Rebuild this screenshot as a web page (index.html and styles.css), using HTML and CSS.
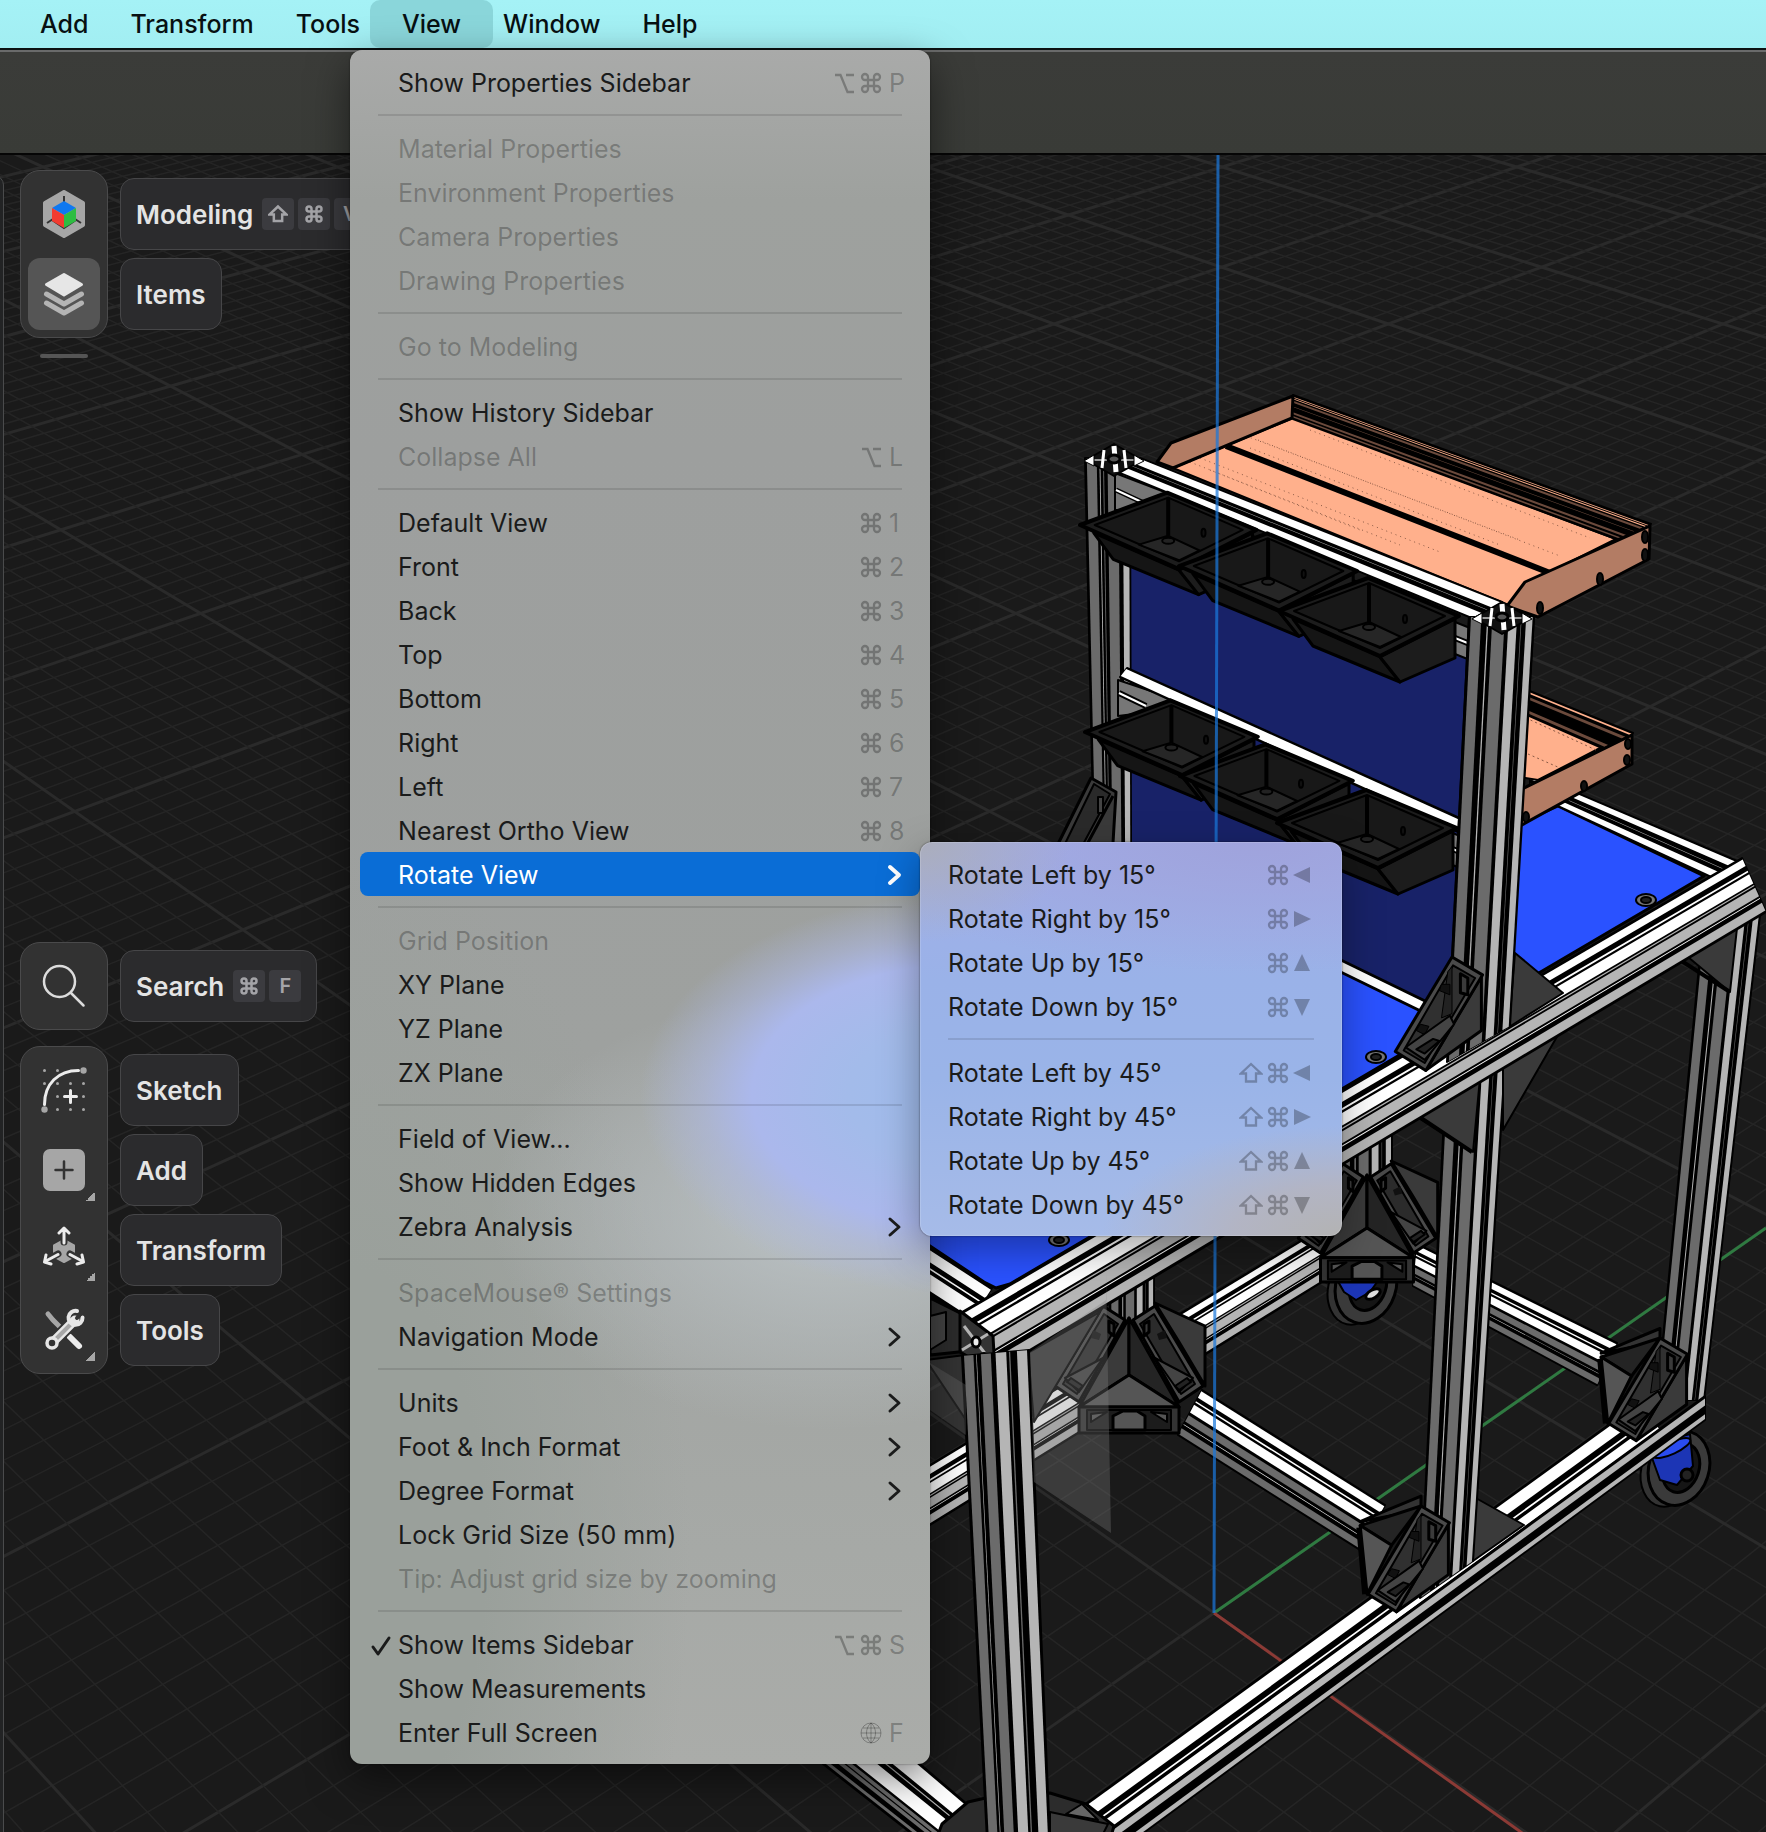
FILE: index.html
```html
<!DOCTYPE html>
<html lang="en">
<head>
<meta charset="utf-8">
<title>Workbench</title>
<link rel="stylesheet" href="styles.css">
</head>
<body>
<svg class="sprite" aria-hidden="true">
  <symbol id="cmd" viewBox="0 0 24 24"><path d="M15 6v12a3 3 0 1 0 3-3H6a3 3 0 1 0 3 3V6a3 3 0 1 0-3 3h12a3 3 0 1 0-3-3"/></symbol>
  <symbol id="opt" viewBox="0 0 24 24"><path d="M3 4h5.500l7 17H22M14 4h8"/></symbol>
  <symbol id="shift" viewBox="0 0 24 24"><path d="M12 3 2 12.500h5V20.500h10V12.500h5z"/></symbol>
  <symbol id="chev" viewBox="0 0 24 24"><path d="m8 4 9 8-9 8"/></symbol>
  <symbol id="tick" viewBox="0 0 24 24"><path d="m4 14 5 7L20 5"/></symbol>
  <symbol id="globe" viewBox="0 0 24 24"><path d="M12 2a10 10 0 1 0 0 20a10 10 0 1 0 0-20M12 2c-6 5-6 15 0 20M12 2c6 5 6 15 0 20M12 2v20M2 12h20M4 7h16M4 17h16"/></symbol>
  <symbol id="tl" viewBox="0 0 24 24"><path d="M3 12 20 4v16z"/></symbol>
  <symbol id="tr" viewBox="0 0 24 24"><path d="M21 12 4 4v16z"/></symbol>
  <symbol id="tu" viewBox="0 0 24 24"><path d="M12 3 4 20h16z"/></symbol>
  <symbol id="td" viewBox="0 0 24 24"><path d="M12 21 4 4h16z"/></symbol>
</svg>

<nav class="menubar" aria-label="Menu bar">
  <ul class="menubar-list">
    <li><button class="menubar-item">Add</button></li>
    <li><button class="menubar-item">Transform</button></li>
    <li><button class="menubar-item">Tools</button></li>
    <li class="anchor">
      <button class="menubar-item open" aria-expanded="true">View</button>
      <ul class="menu view-menu">
        <li><button class="item">Show Properties Sidebar<span class="keys"><svg><use href="#opt"/></svg><svg><use href="#cmd"/></svg><b>P</b></span></button></li>
        <li class="sep"></li>
        <li><button class="item" disabled>Material Properties</button></li>
        <li><button class="item" disabled>Environment Properties</button></li>
        <li><button class="item" disabled>Camera Properties</button></li>
        <li><button class="item" disabled>Drawing Properties</button></li>
        <li class="sep"></li>
        <li><button class="item" disabled>Go to Modeling</button></li>
        <li class="sep"></li>
        <li><button class="item">Show History Sidebar</button></li>
        <li><button class="item" disabled>Collapse All<span class="keys"><svg><use href="#opt"/></svg><b>L</b></span></button></li>
        <li class="sep"></li>
        <li><button class="item">Default View<span class="keys"><svg><use href="#cmd"/></svg><b>1</b></span></button></li>
        <li><button class="item">Front<span class="keys"><svg><use href="#cmd"/></svg><b>2</b></span></button></li>
        <li><button class="item">Back<span class="keys"><svg><use href="#cmd"/></svg><b>3</b></span></button></li>
        <li><button class="item">Top<span class="keys"><svg><use href="#cmd"/></svg><b>4</b></span></button></li>
        <li><button class="item">Bottom<span class="keys"><svg><use href="#cmd"/></svg><b>5</b></span></button></li>
        <li><button class="item">Right<span class="keys"><svg><use href="#cmd"/></svg><b>6</b></span></button></li>
        <li><button class="item">Left<span class="keys"><svg><use href="#cmd"/></svg><b>7</b></span></button></li>
        <li><button class="item">Nearest Ortho View<span class="keys"><svg><use href="#cmd"/></svg><b>8</b></span></button></li>
        <li class="anchor">
          <button class="item active" aria-expanded="true">Rotate View<svg class="chev"><use href="#chev"/></svg></button>
          <ul class="menu submenu">
            <li><button class="item">Rotate Left by 15°<span class="keys"><svg><use href="#cmd"/></svg><svg class="solid"><use href="#tl"/></svg></span></button></li>
            <li><button class="item">Rotate Right by 15°<span class="keys"><svg><use href="#cmd"/></svg><svg class="solid"><use href="#tr"/></svg></span></button></li>
            <li><button class="item">Rotate Up by 15°<span class="keys"><svg><use href="#cmd"/></svg><svg class="solid"><use href="#tu"/></svg></span></button></li>
            <li><button class="item">Rotate Down by 15°<span class="keys"><svg><use href="#cmd"/></svg><svg class="solid"><use href="#td"/></svg></span></button></li>
            <li class="sep"></li>
            <li><button class="item">Rotate Left by 45°<span class="keys"><svg><use href="#shift"/></svg><svg><use href="#cmd"/></svg><svg class="solid"><use href="#tl"/></svg></span></button></li>
            <li><button class="item">Rotate Right by 45°<span class="keys"><svg><use href="#shift"/></svg><svg><use href="#cmd"/></svg><svg class="solid"><use href="#tr"/></svg></span></button></li>
            <li><button class="item">Rotate Up by 45°<span class="keys"><svg><use href="#shift"/></svg><svg><use href="#cmd"/></svg><svg class="solid"><use href="#tu"/></svg></span></button></li>
            <li><button class="item">Rotate Down by 45°<span class="keys"><svg><use href="#shift"/></svg><svg><use href="#cmd"/></svg><svg class="solid"><use href="#td"/></svg></span></button></li>
          </ul>
        </li>
        <li class="sep"></li>
        <li><button class="item" disabled>Grid Position</button></li>
        <li><button class="item">XY Plane</button></li>
        <li><button class="item">YZ Plane</button></li>
        <li><button class="item">ZX Plane</button></li>
        <li class="sep"></li>
        <li><button class="item">Field of View...</button></li>
        <li><button class="item">Show Hidden Edges</button></li>
        <li><button class="item">Zebra Analysis<svg class="chev"><use href="#chev"/></svg></button></li>
        <li class="sep"></li>
        <li><button class="item" disabled>SpaceMouse® Settings</button></li>
        <li><button class="item">Navigation Mode<svg class="chev"><use href="#chev"/></svg></button></li>
        <li class="sep"></li>
        <li><button class="item">Units<svg class="chev"><use href="#chev"/></svg></button></li>
        <li><button class="item">Foot &amp; Inch Format<svg class="chev"><use href="#chev"/></svg></button></li>
        <li><button class="item">Degree Format<svg class="chev"><use href="#chev"/></svg></button></li>
        <li><button class="item">Lock Grid Size (50 mm)</button></li>
        <li><button class="item" disabled>Tip: Adjust grid size by zooming</button></li>
        <li class="sep"></li>
        <li><button class="item checked"><svg class="tick"><use href="#tick"/></svg>Show Items Sidebar<span class="keys"><svg><use href="#opt"/></svg><svg><use href="#cmd"/></svg><b>S</b></span></button></li>
        <li><button class="item">Show Measurements</button></li>
        <li><button class="item">Enter Full Screen<span class="keys"><svg class="fine"><use href="#globe"/></svg><b>F</b></span></button></li>
      </ul>
    </li>
    <li><button class="menubar-item">Window</button></li>
    <li><button class="menubar-item">Help</button></li>
  </ul>
</nav>
<div class="titlebar"></div>

<main class="viewport">
  <svg class="scene" id="scene" viewBox="0 155 1766 1677" preserveAspectRatio="xMinYMin slice" role="img" aria-label="Workbench model"></svg>
  <div class="panel-edge"></div>
  <div class="tools">
    <div class="group">
      <div class="rail">
        <button class="tool" aria-label="Modeling">
          <svg viewBox="0 0 48 48" class="ico48"><path d="M24 2 43 13v22L24 46 5 35V13z" fill="#a6a6a6" stroke="#a6a6a6" stroke-width="4" stroke-linejoin="round"/><path d="M24 6v8M7 33l6-4M41 33l-6-4M12 30l12 8 12-8" stroke="#333" stroke-width="2" fill="none"/><path d="M24 11 36 18 24 25 12 18z" fill="#0f78f0"/><path d="M12 18 24 25V38L12 31z" fill="#f23b30"/><path d="M36 18 24 25V38L36 31z" fill="#2ebd42"/></svg>
        </button>
        <button class="tool selected" aria-label="Items">
          <svg viewBox="0 0 48 48" class="ico48"><g stroke-linejoin="round" stroke-linecap="round"><path d="M6.500 33 24 43l17.500-10" fill="none" stroke="#b4b4b4" stroke-width="5"/><path d="M6.500 24 24 34l17.500-10" fill="none" stroke="#555" stroke-width="8"/><path d="M6.500 24 24 34l17.500-10" fill="none" stroke="#b4b4b4" stroke-width="5"/><path d="M24 4.500 42 14.500 24 25.500 6 14.500z" fill="#555" stroke="#555" stroke-width="6"/><path d="M24 4.500 41.500 14.500 24 25 6.500 14.500z" fill="#e6e6e6" stroke="#e6e6e6" stroke-width="3"/></g></svg>
        </button>
      </div>
      <div class="labels">
        <button class="label">Modeling<kbd class="first"><svg><use href="#shift"/></svg></kbd><kbd><svg><use href="#cmd"/></svg></kbd><kbd>V</kbd></button>
        <button class="label">Items</button>
      </div>
    </div>
    <div class="handle"></div>
    <div class="group search">
      <div class="rail">
        <button class="tool" aria-label="Search">
          <svg viewBox="0 0 48 48" class="ico48" fill="none" stroke="#dcdcdc" stroke-width="2.500" stroke-linecap="round"><circle cx="19.500" cy="19.500" r="15.500"/><path d="M31 31 43.500 43.500"/></svg>
        </button>
      </div>
      <div class="labels">
        <button class="label">Search<kbd class="first"><svg><use href="#cmd"/></svg></kbd><kbd>F</kbd></button>
      </div>
    </div>
    <div class="group">
      <div class="rail">
        <button class="tool" aria-label="Sketch">
          <svg viewBox="0 0 48 48" class="ico48"><g fill="#a6a6a6"><circle cx="4.500" cy="4.500" r="1.500"/><circle cx="17.500" cy="4.500" r="1.500"/><circle cx="4.500" cy="17.500" r="1.500"/><circle cx="17.500" cy="17.500" r="1.500"/><circle cx="30.500" cy="17.500" r="1.500"/><circle cx="43.500" cy="17.500" r="1.500"/><circle cx="17.500" cy="30.500" r="1.500"/><circle cx="43.500" cy="30.500" r="1.500"/><circle cx="17.500" cy="43.500" r="1.500"/><circle cx="30.500" cy="43.500" r="1.500"/><circle cx="43.500" cy="43.500" r="1.500"/><circle cx="43.500" cy="4.500" r="3.200"/><circle cx="4.500" cy="43.500" r="3.200"/></g><path d="M4.500 38.500C4.500 18 18 4.500 38.500 4.500M30.500 24.500v12M24.500 30.500h12" fill="none" stroke="#ececec" stroke-width="3" stroke-linecap="round"/></svg>
        </button>
        <button class="tool more" aria-label="Add">
          <svg viewBox="0 0 48 48" class="ico48"><rect x="3" y="3" width="42" height="42" rx="7" fill="#a6a6a6"/><path d="M24 15.500v17M15.500 24h17" stroke="#333" stroke-width="2.500" stroke-linecap="round"/></svg>
        </button>
        <button class="tool more" aria-label="Transform">
          <svg viewBox="0 0 48 48" class="ico48"><path d="M24 14 34 19.500v11L24 36 14 30.500v-11z" fill="#a6a6a6" stroke="#a6a6a6" stroke-width="2" stroke-linejoin="round"/><g fill="none" stroke-linecap="round" stroke-linejoin="round"><path d="M24 16V6M18 28 7 34M30 28l11 6" stroke="#333" stroke-width="7"/><path d="M24 17V2.500M19 7 24 2l5 5M18 28.500 5 35.500M6 29l-1.500 7 6.500 2M30 28.500 43 35.500M42 29l1.500 7-6.500 2" stroke="#ececec" stroke-width="3"/></g></svg>
        </button>
        <button class="tool more" aria-label="Tools">
          <svg viewBox="0 0 48 48" class="ico48" fill="none" stroke-linecap="round"><path d="M8 8l5 6 7 7" stroke="#a6a6a6" stroke-width="5"/><path d="M30 31l9 9" stroke="#ececec" stroke-width="6"/><path d="M13 36 35 14" stroke="#333" stroke-width="13"/><path d="M13 36 35 14" stroke="#e6e6e6" stroke-width="9"/><path d="M17 32 31 18" stroke="#a6a6a6" stroke-width="4"/><circle cx="12" cy="37" r="5" fill="#333" stroke="#e6e6e6" stroke-width="3.500"/><path d="M37 5a7 7 0 1 0 5.500 6.500" stroke="#e6e6e6" stroke-width="4"/><path d="M37 12 43 5" stroke="#333" stroke-width="4"/></svg>
        </button>
      </div>
      <div class="labels">
        <button class="label">Sketch</button>
        <button class="label">Add</button>
        <button class="label">Transform</button>
        <button class="label">Tools</button>
      </div>
    </div>
  </div>
</main>
<script src="scene.js"></script>
</body>
</html>
```
FILE: styles.css
```css
* { box-sizing: border-box; }
body {
  margin: 0;
  min-height: 100vh;
  display: flex;
  flex-direction: column;
  background: #1a1a1a;
  font-family: Inter, "Liberation Sans", sans-serif;
  font-size: 25px;
  overflow-x: hidden;
}
ul { list-style: none; margin: 0; padding: 0; }
button { font: inherit; color: inherit; border: 0; background: none; padding: 0; }
.sprite { position: absolute; width: 0; height: 0; }

/* menu bar */
.menubar {
  height: 50px;
  background: linear-gradient(#a5f2f6, #a2eef2);
  border-bottom: 2px solid #0c1212;
  position: relative;
  z-index: 2;
}
.menubar-list { display: flex; padding-left: 8px; }
.menubar-item {
  height: 48px;
  padding: 0 32px;
  margin-right: -22px;
  line-height: 44px;
  color: #071012;
  font-weight: 500;
  border-radius: 10px;
}
.menubar-item.open { background: #8ad6da; }
.anchor { position: relative; }

/* menus */
.menu {
  position: absolute;
  padding: 10px;
  border-radius: 12px;
  color: #1a1b1b;
  font-optical-sizing: none;
  box-shadow: 0 0 2px rgba(0,0,0,.5), 0 14px 40px rgba(0,0,0,.5);
}
.view-menu {
  left: -20px;
  top: 50px;
  width: 580px;
  background:
    radial-gradient(ellipse 320px 200px at 610px 1045px, #9ebbec 0, #a3bbea 35%, #abb8ec 65%, rgba(172,183,225,.6) 80%, rgba(172,180,205,0)),
    radial-gradient(ellipse 340px 220px at 480px 1160px, rgba(190,198,202,.9), rgba(180,186,186,0)),
    radial-gradient(ellipse 340px 700px at 0 1500px, #9aa09b 40%, rgba(154,160,155,0)),
    linear-gradient(#a9aaa9, #9ea19e 150px, #9d9f9e 400px, #9ea19f 1000px, #a6a9a6 1500px, #aaaca9);
}
.item {
  display: flex;
  align-items: center;
  width: 100%;
  height: 44px;
  padding: 2px 14px 0 38px;
  border-radius: 8px;
  text-align: left;
  white-space: nowrap;
}
.item:disabled { color: rgba(0,0,0,.26); }
.item.active { background: #0a6dd6; color: #fff; }
.sep { height: 22px; padding: 10px 18px; }
.sep::before { content: ""; display: block; height: 2px; background: rgba(0,0,0,.11); }
.keys {
  display: flex;
  align-items: center;
  gap: 3px;
  margin-left: auto;
  color: rgba(0,0,0,.27);
}
.item:disabled .keys { color: inherit; }
.keys b { width: 20px; padding-left: 3px; font-weight: 400; }
.keys svg, .chev, .tick {
  width: 24px;
  height: 24px;
  fill: none;
  stroke: currentColor;
  stroke-width: 2.300;
}
.keys .solid { fill: currentColor; stroke: none; margin-left: -3px; }
.keys .fine { stroke-width: 1; }
.chev { margin-left: auto; stroke-width: 3; stroke-linecap: round; stroke-linejoin: round; }
.active .chev { stroke-width: 4; }
.item.checked { padding-left: 9px; }
.tick { margin-right: 5px; stroke-width: 3; stroke-linecap: round; stroke-linejoin: round; }
.submenu {
  left: 100%;
  top: -10px;
  width: 422px;
  background:
    radial-gradient(ellipse 240px 110px at 100% 100%, #b3b3b3 0, rgba(180,180,192,.9) 45%, rgba(178,184,230,0)),
    radial-gradient(ellipse 150px 100px at 0 0, #abaebb, rgba(171,176,215,0)),
    radial-gradient(ellipse 420px 130px at 80% 0, #9fa3dc, rgba(160,170,232,0)),
    linear-gradient(#a2aee8, #9ab2e8 35%, #9ab4e8 60%, #a6bbe8);
  box-shadow: inset 0 0 0 1px rgba(255,255,255,.15), 0 0 2px rgba(0,0,0,.6), 0 14px 40px rgba(0,0,0,.35);
}
.submenu .item { padding: 2px 18px 0; }

.titlebar {
  height: 105px;
  background: linear-gradient(#3b3c39, #393b37);
  border-top: 2px solid #6a6b6b;
  border-bottom: 2px solid #050505;
}

/* viewport */
.viewport { position: relative; flex: 1; overflow: hidden; }
.scene { position: absolute; inset: 0; width: 100%; height: 100%; }
.panel-edge {
  position: absolute;
  left: -16px;
  top: 20px;
  bottom: -20px;
  width: 20px;
  border: 1px solid #4a4b4c;
  border-radius: 16px;
  background: #222324;
}
.tools { position: relative; padding: 15px 20px; display: flex; flex-direction: column; align-items: flex-start; gap: 16px; }
.group { display: flex; gap: 12px; }
.search { margin-top: 568px; }
.rail {
  display: flex;
  flex-direction: column;
  gap: 8px;
  padding: 7px;
  border: 1px solid #4a4a4b;
  border-radius: 20px;
  background: #323232;
}
.tool { position: relative; width: 72px; height: 72px; border-radius: 12px; display: grid; place-items: center; }
.tool.selected { background: #555; }
.tool.more::after {
  content: "";
  position: absolute;
  right: 5px;
  bottom: 5px;
  width: 9px;
  height: 9px;
  background: linear-gradient(135deg, transparent 50%, #a6a6a6 50%);
}
.ico48 { width: 48px; height: 48px; }
.labels { display: flex; flex-direction: column; align-items: flex-start; gap: 8px; padding: 8px 0; }
.label {
  display: flex;
  align-items: center;
  gap: 4px;
  height: 72px;
  padding: 0 15px;
  border: 1px solid #464648;
  border-radius: 14px;
  background: #2b2b2d;
  color: #e4e4e4;
  font-size: 26px;
  font-weight: 600;
}
kbd {
  display: grid;
  place-items: center;
  width: 32px;
  height: 32px;
  border-radius: 4px;
  background: #3b3b3f;
  color: #a4a4a8;
  font: 600 20px Inter, sans-serif;
}
kbd.first { margin-left: 5px; }
kbd svg { width: 20px; height: 20px; fill: none; stroke: currentColor; stroke-width: 3; }
.handle { width: 48px; height: 4px; margin-left: 20px; border-radius: 2px; background: #555; }
```
FILE: scene.js
```js
// Draws the ground grid, the axes and the aluminium workbench.
const out = [];
const W = '#fff', G = '#b5b5b5', D = '#6b6b6b', K = '#000';
const pts = a => a.map(p => p.join(',')).join(' ');
const poly = (a, fill, sw = 2, stroke = K) =>
  out.push(`<polygon points="${pts(a)}" fill="${fill}" stroke="${stroke}" stroke-width="${sw}" stroke-linejoin="round"/>`);
const line = (a, b, stroke, sw, extra = '') =>
  out.push(`<line x1="${a[0]}" y1="${a[1]}" x2="${b[0]}" y2="${b[1]}" stroke="${stroke}" stroke-width="${sw}" ${extra}/>`);
const ell = (x, y, rx, ry, fill, stroke = K, sw = 2, rot = 0) =>
  out.push(`<ellipse cx="${x}" cy="${y}" rx="${rx}" ry="${ry}" fill="${fill}" stroke="${stroke}" stroke-width="${sw}" transform="rotate(${rot} ${x} ${y})"/>`);
const mix = (a, b, t) => [+(a[0] + (b[0] - a[0]) * t).toFixed(1), +(a[1] + (b[1] - a[1]) * t).toFixed(1)];

// An extrusion between edge a0-b0 and edge a1-b1, striped across its width.
function beam(a0, b0, a1, b1, stripes) {
  poly([a0, b0, b1, a1], K, 2);
  for (const [s, e, c] of stripes) {
    poly([mix(a0, a1, s), mix(b0, b1, s), mix(b0, b1, e), mix(a0, a1, e)], c, 0, 'none');
  }
}
const LIT = [[.03,.15,W],[.235,.265,W],[.3,.47,W],[.5,.52,G],[.55,.71,G],[.74,.755,W],[.83,.97,G]];
const SHADE = [[.03,.17,W],[.25,.28,W],[.33,.5,W],[.56,.7,D],[.76,.77,W],[.85,.98,D]];
const POST = [[.03,.19,D],[.28,.3,G],[.36,.55,D],[.61,.74,G],[.8,.81,D],[.88,.98,G]];

// ground grid: both line families meet their own vanishing point
const origin = [1214, 1613], horizon = -1000;
for (const vx of [4957, -2500]) {
  for (let k = -110; k <= 110; k++) {
    const x = origin[0] + 66 * k;
    const at = y => vx + (x - vx) * (y - horizon) / (origin[1] - horizon);
    line([at(150).toFixed(1), 150], [at(1850).toFixed(1), 1850], k % 10 ? '#252525' : '#2a2a2a', k % 10 ? 1.5 : 3);
  }
}
line(origin, [1766, 1228], '#2f7a41', 3);
line(origin, [1532, 1840], '#8c3a35', 3);

// casters
function caster(x, y) {
  ell(x - 8, y + 4, 26, 35, '#333', K, 2, 12);
  ell(x + 4, y, 30, 38, '#3a3a3a', K, 3, 18);
  ell(x + 6, y, 18, 25, '#151515', K, 3, 18);
}
caster(1362, 1286);
poly([[1336,1278],[1380,1278],[1370,1292],[1356,1300],[1344,1292]], '#1c35b5');
ell(1373, 1294, 8, 4, '#ddd', K, 3, -30);
caster(1675, 1468);
poly([[1652,1458],[1668,1440],[1690,1434],[1693,1466],[1677,1485],[1660,1480]], '#1c35b5');
ell(1672, 1448, 20, 6, '#2a4cf0', K, 2, -25);
ell(1687, 1475, 6, 6, '#222', K, 3);

// lower frame
beam([930,1465], [1322,1228], [930,1525], [1322,1282], LIT);
beam([1417,1244], [1617,1343], [1413,1286], [1597,1385], SHADE);
beam([1202,1390], [1385,1505], [1178,1435], [1360,1550], SHADE);
beam([1110,1277], [1110,1330], [1154,1277], [1154,1330], POST);
beam([1340,1130], [1340,1190], [1392,1125], [1392,1190], POST);

// three-way corner gusset
function corner(x, y, s) {
  const p = a => a.map(([u, v]) => [+(x + u * s).toFixed(1), +(y + v * s).toFixed(1)]);
  poly(p([[26,-15],[76,8],[76,68],[50,24]]), '#3a3a3a', 3);
  for (const m of [-1, 1]) {
    poly(p([[4*m,2],[26*m,-12],[74*m,68],[50*m,84]]), '#4a4a4a', 3);
    poly(p([[11*m,6],[25*m,-4],[66*m,66],[52*m,76]]), '#2b2b2b', 2);
    poly(p([[15*m,6],[20*m,3],[20*m,14],[15*m,18]]), '#3a3a3a', 3);
    poly(p([[28*m,16],[36*m,12],[38*m,20],[30*m,22]]), '#111', 0);
    poly(p([[26*m,40],[64*m,60],[50*m,74]]), '#444', 2);
    poly(p([[46*m,68],[58*m,60],[62*m,64],[50*m,72]]), '#222', 2);
  }
  poly(p([[0,0],[0,57],[-50,89]]), '#3a3a3a', 3);
  poly(p([[0,0],[0,57],[50,89]]), '#242424', 3);
  poly(p([[0,57],[50,89],[-50,89]]), '#555', 3);
  poly(p([[-50,89],[50,89],[50,115],[-50,115]]), '#333', 3);
  poly(p([[-42,92],[42,92],[42,112],[-42,112]]), '#1c1c1c', 2);
  poly(p([[-38,96],[-22,94],[-38,104]]), '#555', 2);
  poly(p([[38,96],[22,94],[38,104]]), '#555', 2);
  poly(p([[-16,112],[-16,98],[-6,93],[8,93],[16,98],[16,112]]), '#555', 3);
}
corner(1129, 1318, 1);
corner(1367, 1175, .93);

// right post
beam([1704,915], [1657,1400], [1760,915], [1704,1400], POST);
poly([[1688,957],[1737,928],[1730,992]], '#3a3a3a');
line([1680, 960], [1730, 992], K, 4);

// rear table edge and top
poly([[1558,806],[1704,876],[1010,1284],[996,1288],[984,1282],[900,1226],[1131,1000]], '#2a52ff', 3);
beam([1530,773], [1744,864], [1530,793], [1711,877], [[.05,.3,W],[.5,.52,G],[.7,.95,W]]);
for (const [x, y] of [[1646,900],[1376,1057],[1059,1240]]) {
  ell(x, y, 10, 6, '#777', K, 2); ell(x, y, 5, 3, '#222', K, 2);
}

// second tray
poly([[1526,700],[1602,747],[1538,780],[1520,777]], '#ffb08c');
beam([1520,687], [1633,733], [1520,712], [1602,748], [[.05,.12,'#ffb08c'],[.25,.36,'#6b4a3c'],[.8,.92,'#6b4a3c']]);
line([1526, 718], [1596, 750], '#8a5a45', 1, 'stroke-dasharray="2 3"');
line([1528, 754], [1560, 768], '#8a5a45', 1, 'stroke-dasharray="2 3"');
poly([[1520,790],[1632,735],[1632,764],[1520,826]], '#b37c64', 3);
for (const [x, y] of [[1628,744],[1627,760],[1584,786],[1526,817]]) ell(x, y, 3, 5, '#111', K, 2);

// back panels
poly([[1126,480],[1480,636],[1452,1016],[1131,862]], '#182268');
beam([1110,847], [1430,1003], [1110,860], [1430,1016], [[.15,.85,W]]);

// upper tray
poly([[1173,468],[1293,418],[1616,539],[1548,573],[1511,606]], '#ffb08c');
line([1226, 446], [1550, 573], K, 6);
for (const [a, b, c, d] of [[1246,436,1520,540],[1258,440,1560,556],[1190,462,1400,545],[1200,458,1440,552],[1250,448,1500,545],[1310,430,1590,538],[1210,470,1360,530]])
  line([a, b], [c, d], '#8a5a45', 1, 'stroke-dasharray="1 4"');
beam([1293,395], [1651,524], [1293,419], [1616,539], [[.07,.1,'#ffb08c'],[.14,.18,'#ffb08c'],[.24,.32,'#6b4a3c'],[.48,.5,'#6b4a3c'],[.72,.8,'#6b4a3c'],[.88,.94,'#6b4a3c']]);
poly([[1157,462],[1171,443],[1293,396],[1292,418],[1173,468]], '#b37c64', 3);
poly([[1525,582],[1650,526],[1649,559],[1538,617],[1507,606]], '#b37c64', 3);
for (const [x, y] of [[1645,537],[1645,555],[1600,579],[1540,608]]) ell(x, y, 3, 6, '#111', K, 2);

// rear-left post and its foot
beam([1085,458], [1094,850], [1130,458], [1131,850], [[.04,.26,D],[.32,.34,G],[.4,.42,D],[.5,.74,D],[.84,.98,G]]);
poly([[1091,778],[1116,792],[1112,860],[1050,860]], '#3a3a3a', 3);
poly([[1094,784],[1110,794],[1080,850],[1062,850]], '#2a2a2a', 2);
poly([[1098,797],[1103,797],[1103,813],[1098,813]], '#444', 2);
line([1113, 796], [1084, 850], K, 3);

// cross rails of the tool wall
poly([[1115,473],[1170,494],[1150,510],[1115,510]], '#777');
line([1116, 490], [1146, 504], K, 5);
line([1116, 490], [1146, 504], W, 2);
beam([1140,458], [1502,602], [1118,472], [1472,618], [[.04,.34,W],[.48,.5,G],[.68,.96,W]]);
poly([[1118,680],[1172,698],[1150,712],[1118,716]], '#777');
line([1119, 693], [1146, 706], K, 6);
line([1119, 693], [1146, 706], W, 2);
beam([1127,668], [1464,820], [1120,677], [1458,832], [[.12,.88,W]]);
for (const y of [0, 212]) {
  poly([[1450,620+y],[1470,628+y],[1470,660+y],[1450,652+y]], '#777');
  line([1450, 636 + y], [1470, 644 + y], K, 6);
  line([1450, 636 + y], [1470, 644 + y], W, 2);
}

// storage bins
function bin(x, y, s) {
  const p = a => a.map(([u, v]) => [+(x + u * s).toFixed(1), +(y + v * s).toFixed(1)]);
  poly(p([[14,8],[101,46],[121,71],[34,35]]), '#151515', 3);
  poly(p([[101,46],[176,8],[176,47],[121,71]]), '#1c1c1c', 3);
  poly(p([[0,0],[89,-33],[180,5],[101,45]]), '#1c1c1c', 4);
  poly(p([[15,0],[90,-28],[166,5],[101,37]]), '#181818', 2);
  poly(p([[60,20],[90,11],[122,26],[101,36]]), '#262626', 2);
  line(p([[90,-28]])[0], p([[90,11]])[0], K, 4);
  const [c, d] = p([[90, 16], [126, 8]]);
  ell(c[0], c[1], 6, 3, '#222', K, 2);
  ell(d[0], d[1], 2, 4, '#111', K, 2);
}
bin(1080, 525, .98); bin(1179, 566, .99); bin(1279, 611, 1);
bin(1085, 732, .96); bin(1180, 776, .96); bin(1277, 823, 1);

// post cap: cross-shaped extrusion end
function cap(x, y) {
  poly([[x-28,y+2],[x,y-14],[x+28,y+2],[x,y+18]], '#111', 2);
  line([x-22, y+2], [x+22, y+2], '#999', 2);
  line([x, y-12], [x+2, y+14], W, 5);
  for (const m of [-1, 1]) {
    line([x+m*10, y-8], [x+m*12, y+10], W, 3);
    poly([[x+m*30,y+3],[x+m*20,y-3],[x+m*20,y+8]], W, 1);
  }
  ell(x, y+1, 6, 4, '#555', K, 3);
}

// front long beam of the lower frame, with the middle post standing on it
beam([1087,1803], [1640,1402], [1112,1828], [1660,1430], [[.05,.38,W],[.55,.6,W],[.7,.96,W]]);
poly([[1474,1497],[1524,1525],[1473,1561]], '#3a3a3a');
beam([1469,617], [1420,1598], [1534,617], [1473,1561], POST);
beam([1112,1828], [1705,1396], [1112,1856], [1705,1420], [[.1,.4,G],[.76,.96,G]]);

// plates under the table beam
poly([[1417,1117],[1480,1078],[1473,1152]], '#3a3a3a');
line([1415, 1114], [1472, 1152], K, 4);
poly([[1503,1060],[1562,1028],[1503,1130]], '#3a3a3a');

// slanted gusset frame with its closing plates
function slant(x, y, s, full) {
  const p = a => a.map(([u, v]) => [+(x + u * s).toFixed(1), +(y + v * s).toFixed(1)]);
  if (full) {
    poly(p([[-62,16],[-34,4],[0,-10],[0,4]]), '#333', 3);
    poly(p([[-62,20],[0,0],[-30,40]]), '#242424', 3);
    poly(p([[-62,20],[-30,40],[-55,90]]), '#555', 3);
    line(p([[-64,22]])[0], p([[-58,90]])[0], K, 4);
  }
  poly(p([[28,18],[28,70],[-25,108]]), '#3a3a3a', 3);
  poly(p([[0,0],[29,17],[-25,108],[-54,90]]), '#4a4a4a', 3);
  poly(p([[1,8],[22,20],[-26,101],[-46,89]]), '#303030', 2);
  poly(p([[0,9],[0,54],[-10,58],[-4,14]]), '#222', 1);
  poly(p([[8,16],[15,20],[15,36],[8,34]]), '#3a3a3a', 3);
  poly(p([[-10,26],[-2,26],[-2,36],[-12,32]]), '#111', 1);
  poly(p([[-30,64],[-22,66],[-26,74],[-34,70]]), '#111', 1);
  poly(p([[-44,86],[-2,56],[2,64],[-26,98]]), '#444', 2);
  poly(p([[-34,88],[-18,78],[-12,80],[-26,92]]), '#222', 2);
}
slant(1421, 1506, .98, true);
slant(1660, 1338, .95, true);

// table front beams
beam([890,1222], [992,1288], [890,1270], [970,1322], [[.05,.3,W],[.42,.46,W],[.55,.9,W]]);
poly([[930,1298],[978,1322],[978,1350],[930,1355]], '#2c2c2c', 3);
poly([[930,1316],[946,1312],[946,1340],[930,1350]], '#444', 2);
beam([962,1312], [1742,858], [995,1372], [1766,912], LIT);
poly([[960,1311],[993,1336],[995,1372],[960,1352]], '#333', 3);
line([964, 1326], [990, 1360], G, 3);
line([962, 1350], [988, 1334], G, 3);
ell(976, 1342, 4, 5, '#eee', K, 3);
ell(984, 1356, 4, 3, '#eee', K, 2);

// the middle post and its plate stand on top of the table beam
poly([[1515,953],[1563,993],[1509,1027]], '#3a3a3a');
beam([1469,617], [1447,1062], [1534,617], [1510,1026], POST);
slant(1452, 957, 1.05, false);
cap(1502, 616);
cap(1114, 458);

// front-left post, plates and its foot
poly([[935,1832],[986,1798],[1050,1793],[1086,1804],[1114,1826],[1110,1840],[935,1840]], '#2c2c2c', 3);
poly([[1050,1812],[1108,1824],[1100,1840],[1050,1840]], '#3a3a3a', 2);
poly([[945,1818],[968,1802],[976,1810]], '#666', 2);
poly([[1066,1814],[1082,1804],[1098,1820]], '#666', 2);
beam([920,1764], [967,1804], [823,1764], [935,1852], [[.03,.28,W],[.34,.36,G],[.44,.66,W],[.7,.76,D],[.78,.84,D],[.92,.97,D]]);
poly([[942,1824],[968,1802],[990,1797],[990,1840],[936,1840]], '#2a2a2a', 3);
poly([[926,1360],[965,1355],[966,1420]], '#333', 2);
poly([[1028,1353],[1100,1312],[1034,1422]], '#3a3a3a', 2);
beam([962,1356], [987,1840], [1029,1350], [1050,1840], [[.03,.17,D],[.21,.22,G],[.28,.43,D],[.5,.66,G],[.7,.72,D],[.82,.97,G]]);
poly([[1106,1273],[1111,1533],[1034,1482],[1030,1352],[1106,1300]], 'rgba(130,130,130,.32)', 0, 'none');
poly([[930,1363],[966,1385],[966,1435],[930,1410]], 'rgba(130,130,130,.25)', 0, 'none');

line([1218, 155], [1214, 1613], '#1a78dc', 3, 'opacity=".72"');

document.getElementById('scene').innerHTML = out.join('');
```
